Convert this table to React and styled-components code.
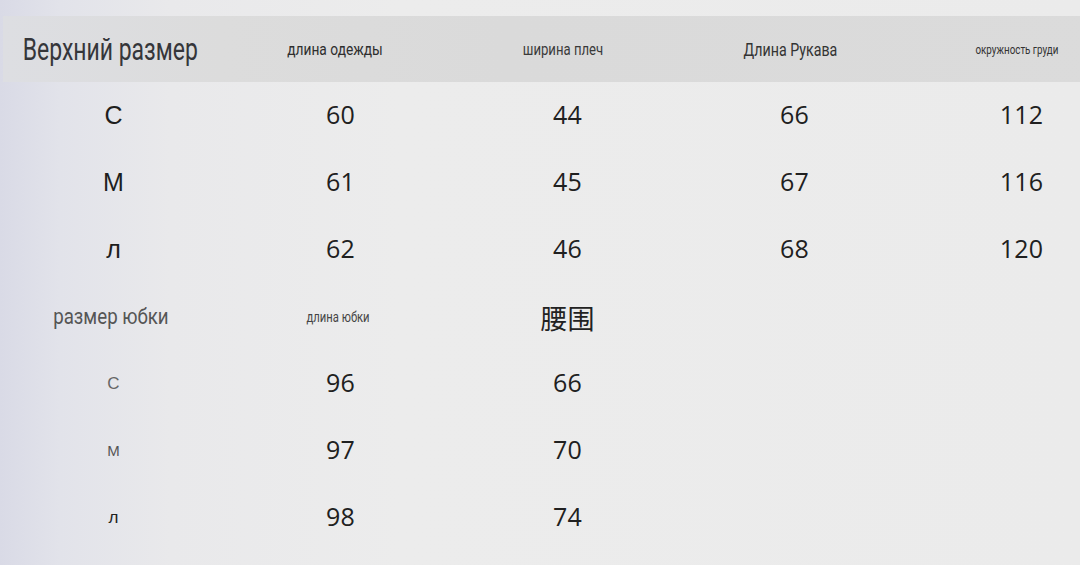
import React from 'react';
import styled, { createGlobalStyle } from 'styled-components';

const GlobalStyle = createGlobalStyle`
  html, body {
    margin: 0;
    padding: 0;
    width: 1080px;
    height: 565px;
    overflow: hidden;
  }
  body {
    background: linear-gradient(90deg, #d9dae6 0px, #e2e3ea 60px, #e9e9eb 170px, #ececec 400px, #ebebeb 100%);
    font-family: 'Liberation Sans', Arial, sans-serif;
  }
`;

const Sheet = styled.div`
  width: 1135px;
  padding-top: 16px;
  display: flex;
  flex-direction: column;
`;

const Row = styled.div`
  display: grid;
  grid-template-columns: 227px 227px 227px 227px 227px;
  height: 67px;
  align-items: center;
  justify-items: center;
`;

const HeadRow = styled(Row)`
  height: 66px;
  margin-left: 3px;
  grid-template-columns: 224px 227px 227px 227px 227px;
  background: linear-gradient(90deg, #dddee2 0px, #dcdcdc 220px, #dadada 500px, #dbdbdb 100%);
`;

const Squeezed = styled.span`
  display: inline-block;
  white-space: nowrap;
  font-family: Roboto, 'Liberation Sans', sans-serif;
  font-size: ${p => p.$size}px;
  color: ${p => p.$color || '#333'};
  transform: scaleX(${p => p.$sx || 0.8});
  transform-origin: center;
  margin-left: ${p => p.$shift || 0}px;
`;

const Size = styled.span`
  font-family: 'Liberation Sans', Arial, sans-serif;
  font-size: ${p => p.$size || 25}px;
  color: ${p => p.$color || '#1e1e1e'};
  margin-left: ${p => p.$shift || 0}px;
`;

const Num = styled.span`
  font-family: 'Open Sans', 'Noto Sans', sans-serif;
  font-size: 25px;
  color: #202020;
  letter-spacing: 0.2px;
  margin-bottom: 4px;
`;

const Cjk = styled.span`
  font-family: 'Noto Sans CJK SC', sans-serif;
  font-size: 27px;
  color: #222;
  margin-top: 2px;
`;

const top = [
  ['С', 60, 44, 66, 112],
  ['М', 61, 45, 67, 116],
  ['л', 62, 46, 68, 120],
];

const skirt = [
  ['С', 96, 66, 17, '#666'],
  ['М', 97, 70, 15, '#555'],
  ['л', 98, 74, 17, '#222'],
];

export default function App() {
  return (
    <>
      <GlobalStyle />
      <Sheet>
        <HeadRow>
          <Squeezed $size={31} $sx={0.74} $color="#35363a" $shift={-10}>Верхний размер</Squeezed>
          <Squeezed $size={17} $sx={0.81} $color="#2e2e2e" $shift={-11}>длина одежды</Squeezed>
          <Squeezed $size={16} $sx={0.82} $color="#3a3a3a" $shift={-10}>ширина плеч</Squeezed>
          <Squeezed $size={18} $sx={0.79} $color="#333" $shift={-8}>Длина Рукава</Squeezed>
          <Squeezed $size={13} $sx={0.755} $color="#333" $shift={-10}>окружность груди</Squeezed>
        </HeadRow>
        {top.map(r => (
          <Row key={r[0]}>
            <Size>{r[0]}</Size>
            <Num>{r[1]}</Num>
            <Num>{r[2]}</Num>
            <Num>{r[3]}</Num>
            <Num>{r[4]}</Num>
          </Row>
        ))}
        <Row>
          <Squeezed $size={22} $sx={0.85} $color="#555" $shift={-6}>размер юбки</Squeezed>
          <Squeezed $size={15} $sx={0.75} $color="#444" $shift={-4}>длина юбки</Squeezed>
          <Cjk>腰围</Cjk>
          <span />
          <span />
        </Row>
        {skirt.map(r => (
          <Row key={r[0]}>
            <Size $size={r[3]} $color={r[4]}>{r[0]}</Size>
            <Num>{r[1]}</Num>
            <Num>{r[2]}</Num>
            <span />
            <span />
          </Row>
        ))}
      </Sheet>
    </>
  );
}
